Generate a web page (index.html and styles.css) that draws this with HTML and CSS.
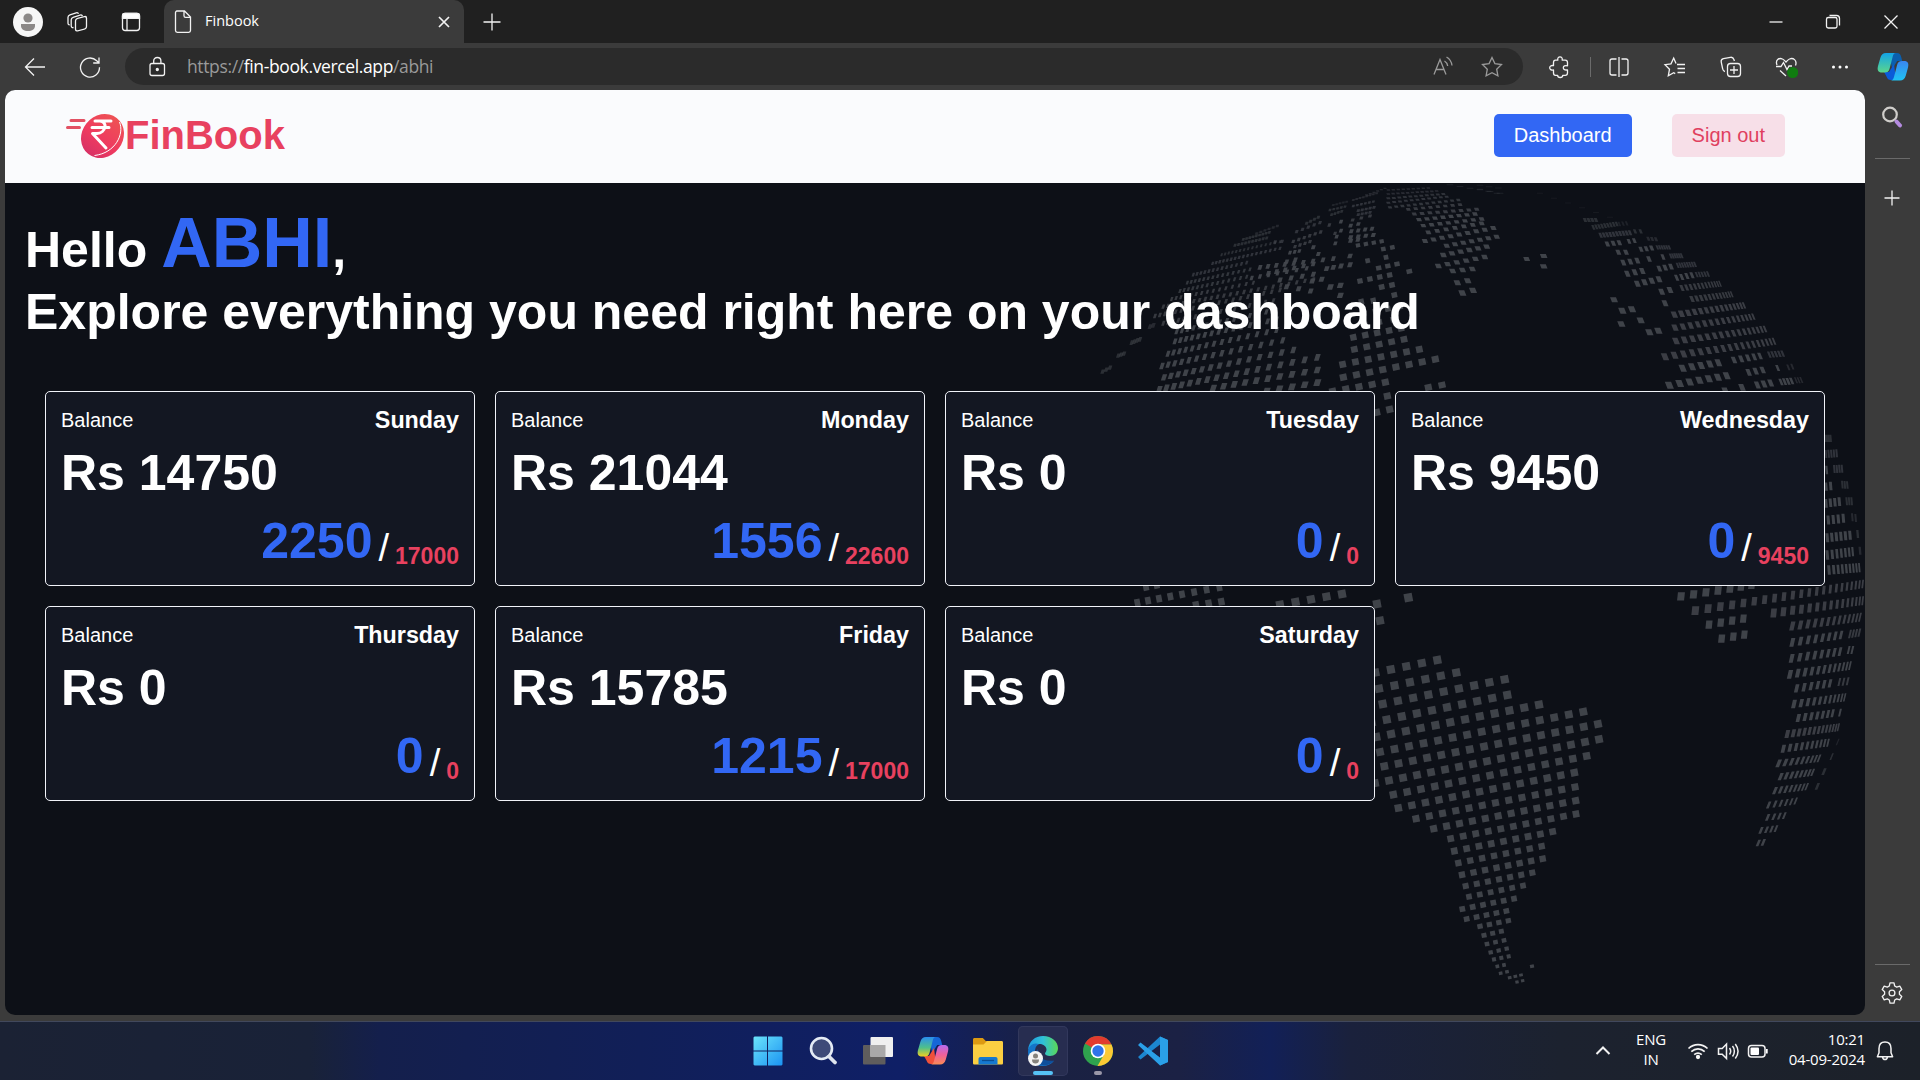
FILE: index.html
```html
<!DOCTYPE html>
<html lang="en">
<head>
<meta charset="utf-8">
<title>Finbook</title>
<link rel="stylesheet" href="styles.css">
</head>
<body>
<div class="titlebar">
  <span class="cell c-avatar"><svg width="30" height="30" viewBox="0 0 30 30"><circle cx="15" cy="15" r="15" fill="#f6f6f6"/><circle cx="15" cy="11" r="4.6" fill="#8b8887"/><path d="M8 17h14v2c0 3-3 5-7 5s-7-2-7-5z" fill="#8b8887"/></svg></span>
  <span class="cell c-work"><svg class="ico" viewBox="0 0 24 24"><rect x="9.5" y="7" width="11" height="12.500" rx="2.200" transform="skewY(-14) translate(0 4.200)"/><path d="M7.500 17.500c-1.500.3-2.300-.5-2.300-1.700V9.700c0-1.300.7-2 1.900-2.400l7-2.200c1.300-.4 2 .1 2.300 1.100"/><path d="M3.700 14.700C2.500 14.900 2 14 2 13V7.200c0-1.300.7-2 1.900-2.400l6.300-2c1.300-.4 2 .1 2.300 1"/></svg></span>
  <span class="cell c-tabs"><svg class="ico" viewBox="0 0 24 24"><rect x="3.500" y="3.500" width="17" height="17" rx="2.800"/><path d="M3.500 5.500c0-1.500 1-2.200 2.400-2.200h12c1.600 0 2.600.8 2.600 2.200v2.800h-17z" fill="#fff"/><path d="M8 8v12.500"/></svg></span>
  <div class="tab">
    <svg class="ico" viewBox="0 0 24 24"><path d="M5.500 1h8l6 6v13.500a1.800 1.800 0 0 1-1.800 1.800H6.300a1.800 1.800 0 0 1-1.800-1.800V2.800C4.500 1.800 5 1 6 1zM13 1.300v4.500c0 1 .6 1.600 1.600 1.600h4.600"/></svg>
    <span class="tab-title">Finbook</span>
    <svg class="ico thick" viewBox="0 0 24 24"><path d="M7 7l10 10M17 7L7 17"/></svg>
  </div>
  <span class="cell c-new"><svg class="ico" viewBox="0 0 24 24"><path d="M12 3.500v17M3.500 12h17"/></svg></span>
  <span class="spacer"></span>
  <span class="cell c-win"><svg class="ico" viewBox="0 0 24 24"><path d="M5.500 12h13"/></svg></span>
  <span class="cell c-win"><svg class="ico" viewBox="0 0 24 24"><rect x="5.500" y="7.500" width="10.500" height="10.500" rx="1.800"/><path d="M8.500 5.500h7c2 0 3 1 3 3v7"/></svg></span>
  <span class="cell c-win"><svg class="ico" viewBox="0 0 24 24"><path d="M5.500 5.500l13 13M18.500 5.500l-13 13"/></svg></span>
</div>

<div class="toolbar">
  <span class="cell c-back"><svg class="ico" viewBox="0 0 24 24"><path d="M22 12H2.500M11 3.500L2.500 12l8.500 8.500"/></svg></span>
  <span class="cell c-reload"><svg class="ico" viewBox="0 0 24 24"><path d="M21.500 12.300a9.500 9.500 0 1 1-2.800-6.500l2.300 2M21 2.500V8h-5.800"/></svg></span>
  <div class="address">
    <span class="cell c-lock"><svg class="ico" viewBox="0 0 24 24"><rect x="5" y="8.500" width="14.500" height="12" rx="2"/><path d="M8.700 8.500V6c0-2 1.500-3.500 3.600-3.500S15.900 4 15.900 6v2.500"/><circle cx="12.300" cy="14.500" r="1" fill="#fff"/></svg></span>
    <span class="url">https://<b>fin-book.vercel.app</b>/abhi</span>
    <span class="spacer"></span>
    <span class="cell c-read"><svg class="ico dim" viewBox="0 0 24 24"><path d="M3 19.500L9 4.500l6 15M5 14.500h8M13.500 6c2 1.200 3 3 3.200 5M15.500 2c3.200 1.800 5 4.700 5.500 8.500"/></svg></span>
    <span class="cell c-star"><svg class="ico dim" viewBox="0 0 24 24"><path d="M12 2.500l2.900 6.100 6.600.9-4.800 4.700 1.200 6.700-5.900-3.200-5.900 3.200 1.200-6.700-4.800-4.700 6.600-.9z"/></svg></span>
  </div>
  <span class="cell c-ext"><svg class="ico" viewBox="0 0 24 24"><path d="M5.500 7.500c0-1.500.7-2.300 2-2.300h2.300c-.4-2 .6-3.400 2.200-3.400s2.600 1.400 2.200 3.400h3c1.500 0 2.300.8 2.300 2.300v3.300c-2.600-.6-4.200.3-4.200 2s1.600 2.600 4.200 2v3.300c0 1.500-.8 2.300-2.300 2.300h-2.500c0 1.300-1 2.100-2.500 2.100s-2.500-.8-2.500-2.100H7.500c-1.300 0-2-.8-2-2.300V15C3 15.300 1.700 14.300 1.700 12.800S3 10.200 5.500 10.600z" stroke-linejoin="round"/></svg></span>
  <span class="vline"></span>
  <span class="cell c-split"><svg class="ico" viewBox="0 0 24 24"><path d="M9.500 4H5a2 2 0 0 0-2 2v12c0 1.200.8 2 2 2h4.500M14.500 4H19c1.200 0 2 .8 2 2v12c0 1.200-.8 2-2 2h-4.500M12 2v20"/></svg></span>
  <span class="cell c-fav"><svg class="ico" viewBox="0 0 24 24"><path d="M13 8.500L10.700 3 8 8.800l-6 .8 4.500 4.600-1.200 6.600 5.400-3 1.500.8M14 9.500h8M14.500 13.500H22M14.500 17.500H22"/></svg></span>
  <span class="cell c-coll"><svg class="ico" viewBox="0 0 24 24"><rect x="8.500" y="8.500" width="13" height="13" rx="3"/><path d="M15 11v8M11 15h8M6 16.500C4.500 16.200 4 15.600 3.700 14L2.200 7c-.3-1.800.4-3 2.200-3.400l7-1.300c1.700-.3 2.900.4 3.500 2.200l.5 1.500"/></svg></span>
  <span class="cell c-health"><svg class="ico" viewBox="0 0 24 24"><path d="M3 10C1 5 5 2.500 8.500 4c1.500.6 2.500 1.800 3.500 3 1-1.200 2-2.400 3.500-3C19 2.500 23.500 5 21.500 10.500M2 11.500h5l2.500-4 3.500 7 2-3.500h3M6 15.500l6 5.500"/><circle cx="18.700" cy="17.500" r="5.600" fill="#107c10" stroke="none"/></svg></span>
  <span class="cell c-more"><svg class="ico" viewBox="0 0 24 24"><g fill="#fff" stroke="none"><circle cx="5.500" cy="12" r="1.500"/><circle cx="12" cy="12" r="1.500"/><circle cx="18.500" cy="12" r="1.500"/></g></svg></span>
  <span class="cell c-pilot"><svg width="32" height="30" viewBox="0 0 32 30"><defs>
    <linearGradient id="cp1" x1="0" y1="0" x2="0" y2="1"><stop offset="0" stop-color="#12a4e8"/><stop offset="1" stop-color="#5bd68c"/></linearGradient>
    <linearGradient id="cp2" x1="0" y1="0" x2="0" y2="1"><stop offset="0" stop-color="#3a86f0"/><stop offset="1" stop-color="#1fc3f5"/></linearGradient></defs>
    <path d="M12 1h8c2.500 0 3.500 1.500 4.200 4l1 4h-5l-5 8z" fill="#0a5fae"/><path d="M7 20h5l5-8 2 16h-5c-2.500 0-3.700-1-4.500-3.500z" fill="#0b5bd8"/>
    <path d="M9 1h10c-2 0-2.800 1.500-3.400 4L12.500 17c-.7 2.500-2 3.500-5 3.500H5c-4 0-5-2.500-4-6.500l2.300-8C4.300 2.500 6 1 9 1z" fill="url(#cp1)"/><path d="M23 28.500H13.500c2 0 3-1.500 3.600-4l3-11.500c.7-2.500 2-4 5-4H27c4 0 5 2.500 4 6.500l-2.200 8c-1 3.500-2.800 5-5.800 5z" fill="url(#cp2)"/></svg></span>
</div>

<div class="window">
  <main class="page">
    <header class="site-header">
      <div class="logo">
        <svg width="60" height="46" viewBox="0 0 60 46"><defs><linearGradient id="lg" x1="0" y1="0" x2="0" y2="1"><stop offset="0" stop-color="#ee5254"/><stop offset=".6" stop-color="#ee3a60"/><stop offset="1" stop-color="#d83266"/></linearGradient></defs>
          <ellipse cx="36.500" cy="23" rx="20.500" ry="23" fill="url(#lg)" transform="rotate(38 36.500 23)"/>
          <path d="M53.500 9c5 12-4 31-25 33.500" fill="none" stroke="#fff" stroke-width="1"/>
          <path d="M5 7.500h13M1.500 14.500h12" stroke="#e25163" stroke-width="3" stroke-linecap="round"/>
          <path d="M29 8h16M26 14.500h17M34 8c8 .5 6 12-3 12.500h-4.500L40 35" fill="none" stroke="#fff" stroke-width="3" stroke-linecap="round" stroke-linejoin="round"/></svg>
        <span class="logo-text">FinBook</span>
      </div>
      <nav class="actions"><a class="btn btn-primary">Dashboard</a><a class="btn btn-soft">Sign out</a></nav>
    </header>
    <section class="dash">
      <svg class="globe" id="globe" viewBox="5 183 1860 832" width="1860" height="832"></svg>
      <h1 class="hello">Hello <span class="name">ABHI</span>,<br>Explore everything you need right here on your dashboard</h1>
      <div class="cards">
        <article class="card"><div class="top"><span>Balance</span><strong>Sunday</strong></div><p class="amount">Rs 14750</p><div class="ratio"><span class="used">2250</span><span class="slash">/</span><span class="total">17000</span></div></article>
        <article class="card"><div class="top"><span>Balance</span><strong>Monday</strong></div><p class="amount">Rs 21044</p><div class="ratio"><span class="used">1556</span><span class="slash">/</span><span class="total">22600</span></div></article>
        <article class="card"><div class="top"><span>Balance</span><strong>Tuesday</strong></div><p class="amount">Rs 0</p><div class="ratio"><span class="used">0</span><span class="slash">/</span><span class="total">0</span></div></article>
        <article class="card"><div class="top"><span>Balance</span><strong>Wednesday</strong></div><p class="amount">Rs 9450</p><div class="ratio"><span class="used">0</span><span class="slash">/</span><span class="total">9450</span></div></article>
        <article class="card"><div class="top"><span>Balance</span><strong>Thursday</strong></div><p class="amount">Rs 0</p><div class="ratio"><span class="used">0</span><span class="slash">/</span><span class="total">0</span></div></article>
        <article class="card"><div class="top"><span>Balance</span><strong>Friday</strong></div><p class="amount">Rs 15785</p><div class="ratio"><span class="used">1215</span><span class="slash">/</span><span class="total">17000</span></div></article>
        <article class="card"><div class="top"><span>Balance</span><strong>Saturday</strong></div><p class="amount">Rs 0</p><div class="ratio"><span class="used">0</span><span class="slash">/</span><span class="total">0</span></div></article>
      </div>
    </section>
  </main>
  <aside class="sidebar">
    <svg class="s-search" width="24" height="24" viewBox="0 0 24 24"><circle cx="10" cy="9.500" r="6.800" fill="none" stroke="#cfcdca" stroke-width="2.200"/><path d="M16.500 16.500l3.500 4" stroke="#b48be0" stroke-width="4" stroke-linecap="round"/></svg>
    <span class="hline"></span>
    <svg class="ico s-plus" viewBox="0 0 24 24"><path d="M12 4.500v15M4.500 12h15"/></svg>
    <span class="spacer"></span>
    <span class="hline"></span>
    <svg class="ico s-gear" viewBox="0 0 24 24"><path d="M10 1.800h4l.7 3.200 2 1.100 3.100-1 2 3.500-2.400 2.200v2.400l2.400 2.200-2 3.500-3.100-1-2 1.100-.7 3.200h-4L9.300 19l-2-1.100-3.100 1-2-3.500 2.400-2.200v-2.400L2.200 8.600l2-3.500 3.100 1 2-1.100z" stroke-linejoin="round"/><circle cx="12" cy="12" r="2.900"/></svg>
  </aside>
</div>

<div class="taskbar">
  <div class="apps">
    <span class="app"><svg width="30" height="30" viewBox="0 0 30 30"><defs><linearGradient id="w" x1="0" y1="0" x2="1" y2="1"><stop offset="0" stop-color="#6be4fb"/><stop offset="1" stop-color="#1b93f2"/></linearGradient></defs><path d="M1.500.5H14v14H.5v-13zM15 .5h13.500l1 1v13H15zM.5 15.500H14v14H1.500l-1-1zM15 15.500h14.500v13l-1 1H15z" fill="url(#w)"/></svg></span>
    <span class="app"><svg width="30" height="30" viewBox="0 0 30 30"><circle cx="13.500" cy="12.500" r="10.500" fill="#3e4a78" stroke="#e4ebf5" stroke-width="2.600"/><path d="M21 20.500l6 6" stroke="#dfe4ee" stroke-width="3.800" stroke-linecap="round"/></svg></span>
    <span class="app"><svg width="30" height="30" viewBox="0 0 30 30"><rect x="0" y="9" width="22.500" height="19.500" rx="1" fill="#5f5d5d"/><rect x="7.500" y="1" width="22.500" height="20" rx="1" fill="#efefef"/><rect x="7.500" y="9" width="15" height="12" fill="#a9a8a8"/></svg></span>
    <span class="app"><svg width="32" height="30" viewBox="0 0 32 30"><defs>
      <linearGradient id="p1" x1="0" y1="0" x2="0" y2="1"><stop offset="0" stop-color="#2a8ef0"/><stop offset=".55" stop-color="#4fc08a"/><stop offset="1" stop-color="#f0d020"/></linearGradient>
      <linearGradient id="p2" x1="0" y1="0" x2="0" y2="1"><stop offset="0" stop-color="#b36bf0"/><stop offset=".5" stop-color="#f0609a"/><stop offset="1" stop-color="#f98a54"/></linearGradient></defs>
      <path d="M12 1h8c2.500 0 3.500 1.500 4.200 4l1 4h-5l-5 8z" fill="#1567d8"/><path d="M7 20h5l5-8 2 16h-5c-2.500 0-3.700-1-4.500-3.500z" fill="#f0503a"/>
      <path d="M9 1h10c-2 0-2.800 1.500-3.400 4L12.500 17c-.7 2.500-2 3.500-5 3.500H5c-4 0-5-2.500-4-6.500l2.300-8C4.300 2.500 6 1 9 1z" fill="url(#p1)"/><path d="M23 28.500H13.500c2 0 3-1.500 3.600-4l3-11.500c.7-2.500 2-4 5-4H27c4 0 5 2.500 4 6.500l-2.200 8c-1 3.500-2.800 5-5.800 5z" fill="url(#p2)"/></svg></span>
    <span class="app"><svg width="30" height="30" viewBox="0 0 30 30"><path d="M0 3.500C0 2.500.7 2 1.500 2h8.300l3 3H29v8H0z" fill="#dc9a12"/><path d="M0 8.500h10.500L14 5h14.500c1 0 1.500.6 1.500 1.500V27c0 1-.5 1.500-1.500 1.500h-27C.6 28.500 0 28 0 27z" fill="#fbcf42"/><path d="M5.500 28.500V23c0-1.300.8-2 2-2h15c1.300 0 2 .8 2 2v5.500z" fill="#1679d0"/><path d="M9 24.500h12" stroke="#0b4e92" stroke-width="1.300"/></svg></span>
    <span class="app active"><svg width="32" height="32" viewBox="0 0 32 32"><defs><linearGradient id="e1" x1="0" y1=".4" x2="1" y2=".4"><stop offset="0" stop-color="#1e9ae0"/><stop offset=".5" stop-color="#2fc0d8"/><stop offset="1" stop-color="#5bd855"/></linearGradient></defs>
      <path d="M1 15C2 6 8 1 16 1c9 0 15 6 15 12 0 5-3.500 8-8 8-3 0-5-1-5-2.500 0-1 1.500-1.500 1.500-4 0-3-3-5.500-7-5.500-6 0-10 3-11.500 6z" fill="url(#e1)"/><path d="M1 17c0-6 5-10 11-8-4 2-5 7-3 12 2 6 9 9 18 5-3 3.500-7 5-11 5C7 31 1 25 1 17z" fill="#1574c8"/><path d="M11 14c-1.500 6 4 13 16 11.500-3 4-8 5.500-12 4.500-7-2-9-12-4-16z" fill="#0e4f9b"/>
      <circle cx="8.500" cy="23.500" r="7.500" fill="#f4f4f4"/><circle cx="8.500" cy="21" r="2.500" fill="#85827c"/><path d="M5 24.500h7c0 3-1.500 4-3.500 4S5 27.500 5 24.500z" fill="#85827c"/></svg><i class="run wide"></i></span>
    <span class="app"><svg width="32" height="32" viewBox="0 0 32 32"><circle cx="16" cy="16" r="15" fill="#2fa24e"/><path d="M16 16L3 8.500A15 15 0 0 1 29.500 9.500H16z" fill="#e23a2e"/><path d="M16 9.500h13.500A15 15 0 0 1 15.500 31L22 19.500z" fill="#fcc934"/><circle cx="16" cy="16" r="7.300" fill="#fff"/><circle cx="16" cy="16" r="5.700" fill="#2f73ea"/></svg><i class="run"></i></span>
    <span class="app"><svg width="32" height="32" viewBox="0 0 32 32"><path d="M23 1.500L31 5v22l-8 3.500V9.500L3.500 24.500 1 22z" fill="#1c86cf"/><path d="M23 1.500L31 5v22l-8 3.500L1 10l2.500-2.500L23 22.500z" fill="#2aa0e8"/><path d="M23 10.500v11.500l-7.500-5.800z" fill="#1a2045"/></svg></span>
  </div>
  <div class="tray">
    <svg class="ico t-chev" viewBox="0 0 24 24"><path d="M5.500 15L12 8.500l6.500 6.500" stroke-width="2"/></svg>
    <div class="lang">ENG<br>IN</div>
    <svg class="ico t-wifi" viewBox="0 0 24 24"><g stroke-width="1.700"><path d="M2.500 9.500c5.500-5.300 13.500-5.300 19 0M5.300 12.700c4-3.700 9.400-3.700 13.400 0M8.200 15.700c2.300-2 5.300-2 7.600 0"/></g><circle cx="12" cy="18" r="1.500" fill="#fff"/></svg>
    <svg class="ico t-snd" viewBox="0 0 24 24"><path d="M2.500 9.500h3.700L10.500 5v14.500l-4.300-4.300H2.500zM13.500 9c1.500 2 1.500 4.500 0 6.500M16.500 7c2.500 3 2.500 7.500 0 10.500M19.300 5c3.400 4.500 3.400 10 0 14.500" stroke-width="1.500"/></svg>
    <svg class="ico t-bat" viewBox="0 0 24 24"><rect x="2.500" y="6.500" width="16.500" height="11.500" rx="3" stroke-width="1.500"/><rect x="4.500" y="8.500" width="8.500" height="7.500" rx="1" fill="#fff" stroke="none"/><path d="M20 10h1.700v4.500H20z" fill="#fff" stroke="none"/></svg>
    <div class="clock">10:21<br>04-09-2024</div>
    <svg class="ico t-bell" viewBox="0 0 24 24"><path d="M12 3c-4 0-6 2.800-6 6.500v4.300l-1.600 4h15.200l-1.600-4V9.500C18 5.800 16 3 12 3zM9.500 18c.3 1.700 1.200 2.500 2.500 2.500s2.200-.8 2.500-2.500" stroke-width="1.500" stroke-linejoin="round"/></svg>
  </div>
</div>
<script src="globe.js"></script>
</body>
</html>
```

FILE: styles.css
```css
* { box-sizing: border-box; }
body {
  margin: 0;
  width: 1920px;
  height: 1080px;
  overflow: hidden;
  display: flex;
  flex-direction: column;
  background: #3b3b3b;
  color: #fff;
  font-family: "Liberation Sans", Arial, sans-serif;
}
svg { display: block; flex: none; }
.ico { width: 24px; height: 24px; fill: none; stroke: #f2f2f2; stroke-width: 1.3; }
.ico.dim { stroke: #9a9a9a; }
.ico.thick { stroke-width: 1.7; }
.cell { display: flex; align-items: center; justify-content: center; flex: none; }
.spacer { flex: 1; }

.titlebar { display: flex; height: 43px; background: #202020; }
.c-avatar { width: 56px; }
.c-work { width: 44px; }
.c-tabs { width: 62px; }
.c-new { width: 56px; }
.c-win { width: 57px; }
.c-win:last-child { width: 59px; }
.tab {
  display: flex;
  align-items: center;
  width: 300px;
  margin-left: 2px;
  padding: 0 8px 0 7px;
  background: #3b3b3b;
  border-radius: 10px 10px 0 0;
}
.tab-title {
  flex: 1;
  margin-left: 10px;
  margin-top: -2px;
  font: 14.5px "Open Sans", "Noto Sans", sans-serif;
}

.toolbar { display: flex; align-items: center; height: 47px; flex: none; }
.address {
  display: flex;
  align-items: center;
  width: 1398px;
  height: 37px;
  margin-left: 15px;
  border-radius: 19px;
  background: #2b2b2b;
}
.url { margin: -2px 0 0 -1px; color: #9a9a9a; font: 17.5px "Open Sans", "Noto Sans", sans-serif; letter-spacing: -.37px; }
.url b { color: #fff; font-weight: 400; }
.c-back { width: 70px; }
.c-reload { width: 40px; }
.c-lock { width: 63px; }
.c-read { width: 36px; }
.c-star { width: 62px; }
.c-ext { width: 50px; margin-left: 12px; }
.vline { width: 1px; height: 20px; margin: 0 1px 0 5px; background: #6b6b6b; }
.c-split { width: 54px; }
.c-fav { width: 58px; }
.c-coll { width: 53px; }
.c-health { width: 58px; }
.c-more { width: 50px; }
.c-pilot { width: 55px; }

.window { display: flex; height: 931px; flex: none; padding-left: 5px; }
.page {
  width: 1860px;
  height: 925px;
  border-radius: 10px;
  overflow: hidden;
  background: #0d1017;
}
.site-header {
  display: flex;
  align-items: center;
  justify-content: space-between;
  height: 93px;
  padding: 0 80px 2px 61px;
  background: #fafbfd;
}
.logo { display: flex; align-items: center; }
.logo-text { margin-left: -1px; color: #e8415f; font-size: 40px; font-weight: 700; }
.actions { display: flex; gap: 40px; }
.btn {
  height: 43px;
  padding: 0 20px;
  border-radius: 5px;
  font-size: 20px;
  line-height: 43px;
}
.btn-primary { background: #3267f4; color: #fff; }
.btn-soft { background: #f7dfe8; color: #e0405f; }

.dash { position: relative; height: 832px; padding: 25px 20px 0; }
.globe { position: absolute; left: 0; top: 0; }
.hello { position: relative; margin: 0; font-size: 50px; line-height: 62px; }
.name { color: #3267f4; font-size: 70px; line-height: 70px; }
.cards {
  position: relative;
  display: grid;
  grid-template-columns: repeat(4, 430px);
  gap: 20px;
  margin: 48px 20px 0;
}
.card {
  height: 195px;
  padding: 15px;
  border: 1px solid #f1f3f9;
  border-radius: 5px;
  background: #131722;
}
.top { display: flex; justify-content: space-between; align-items: center; height: 26px; font-size: 20px; }
.top strong { font-size: 23.3px; }
.amount { margin: 10px 0 0; font-size: 50px; font-weight: 700; line-height: 60px; }
.ratio { display: flex; justify-content: flex-end; align-items: flex-end; height: 65px; line-height: 1; }
.used { color: #3267f4; font-size: 50px; font-weight: 700; padding-bottom: 2px; }
.slash { font-size: 38px; margin: 0 6px; padding-bottom: 1px; }
.total { color: #e8415f; font-size: 23px; font-weight: 700; }

.sidebar { width: 55px; height: 925px; padding-right: 1px; display: flex; flex-direction: column; align-items: center; }
.s-search { margin-top: 15px; }
.hline { width: 35px; height: 1px; background: #6a6a6a; }
.s-search + .hline { margin-top: 29px; }
.s-plus { margin-top: 27px; }
.s-gear { margin: 16px 0 10px; }

.taskbar {
  position: relative;
  display: flex;
  justify-content: space-between;
  height: 59px;
  flex: none;
  padding-left: 743px;
  border-top: 1px solid #41485c;
  background: linear-gradient(90deg, #1b2234 0, #192238 310px, #141f4c 380px, #111f58 640px, #0f1f66 900px, #1a2142 1050px, #1b2144 1180px, #122057 1270px, #1a213c 1350px, #1c222f 1560px, #1c2129 100%);
}
.apps { display: flex; align-items: center; gap: 5px; }
.app {
  position: relative;
  display: flex;
  align-items: center;
  justify-content: center;
  width: 50px;
  height: 50px;
  margin-top: -1px;
  border-radius: 5px;
}
.active { background: #272d50; box-shadow: inset 0 0 0 1px #32385c; }
.run { position: absolute; bottom: 1px; left: 21px; width: 8px; height: 4px; border-radius: 2px; background: #9a97a8; }
.run.wide { left: 15px; width: 20px; background: #56c2f5; }
.tray { display: flex; align-items: center; font: 15px/20px "Open Sans", "Noto Sans", sans-serif; letter-spacing: -.2px; }
.t-chev { margin-right: 21px; }
.lang { width: 30px; text-align: center; margin: -4px 20px 0 0; }
.t-snd { margin-left: 6px; }
.t-bat { margin-left: 6px; }
.clock { width: 95px; margin-top: -4px; text-align: right; }
.t-bell { margin: 0 23px 0 8px; }
```

FILE: globe.js
```js
// Dotted globe. Each row: x0, y0, x1, y1, count, dot width, dot height, last/first gap ratio, opacity.
// A group's rows share an origin and are in thirds of a pixel.
const groups = [
  { x: 1080, y: 180, skew: -18, rows: [
    [238,628,712,532,17,14,20,1.8],[252,592,640,510,15,13,19,1.7],[246,558,608,481,15,11,19,1.8],
    [264,521,590,450,15,10,18,1.8],[285,484,590,418,15,10,17,1.7],[290,455,585,390,15,9,16,1.6],
    [250,430,580,362,18,8,15,1.7,.8],[225,408,600,330,20,8,14,1.7,.8],[250,380,700,298,24,8,13,1.8,.8],
    [275,357,520,308,15,7,12,1.6,.8],[300,333,500,290,14,7,12,1.5,.75],[322,308,510,268,14,7,11,1.5,.75],
    [340,284,500,248,13,7,11,1.4,.7],[398,250,600,205,17,7,10,1.4,.7],[425,224,600,185,15,6,9,1.4,.6],
    [465,196,560,174,10,8,9,1,.6],[490,178,568,157,9,8,8,1,.6],[530,160,592,138,6,9,7,1,.45],
    [620,320,692,333,3,13,15,1],[400,624,712,570,10,16,20,1.25],[560,633,712,608,5,18,20,1],
    [220,436,210,440,2,10,14,1,.5],[155,488,180,478,4,9,14,1,.6],[115,527,132,521,3,10,13,1,.6],[68,575,90,563,3,10,13,1,.6],
    [540,262,760,236,9,11,14,1.3],[565,280,700,252,6,11,14,1.2],[600,300,700,283,4,12,15,1],[515,294,680,265,7,9,13,1.2],
    [585,186,606,184,2,9,10,1,.7],[620,245,646,239,2,11,13,1],[630,218,658,213,3,9,11,1],[650,155,720,128,5,9,10,1,.7],
    [640,184,722,156,6,9,10,1,.8],[645,200,690,185,4,9,10,1,.8],[680,130,715,112,4,9,9,1,.6],[700,202,715,222,2,11,12,1],
    [748,135,765,160,2,9,10,1,.8],[770,170,766,190,2,10,11,1],[783,125,783,152,2,10,11,1],[755,104,785,94,4,8,8,1,.6],
    [750,90,795,80,5,8,7,1,.6],[760,75,800,65,5,8,6,1,.4],[820,60,890,40,8,8,6,1,.5],[820,78,880,65,6,8,7,1,.7],[835,92,882,82,5,9,8,1,.7],[835,104,870,97,4,9,8,1,.7],
    [818,120,870,108,3,10,9,1,.8],[812,137,835,132,2,11,11,1],[814,154,876,146,4,11,12,1],[812,172,880,165,4,12,12,1],[812,182,834,179,2,12,12,1],
    [783,258,810,254,2,13,15,1],[810,228,810,228,1,13,14,1],[751,321,781,316,2,16,16,1],[781,346,781,346,1,16,16,1],[725,298,697,303,2,14,15,1],
    [740,266,760,262,2,13,14,1]
  ]},
  { x: 1080, y: 180, skew: 0, rot: -12, rows: [
    [820,472,963,445,5,19,19],[823,508,972,478,5,20,19],[788,553,1018,508,7,20,20],[790,592,1066,538,8,21,20],
    [758,634,916,607,5,21,20],[922,648,922,648,1,21,20],[890,697,929,688,2,21,21],[1045,622,1086,615,2,21,19],
    [844,365,880,362,2,16,17],[943,345,943,345,1,17,16],[905,321,936,315,2,17,16],[840,303,929,285,4,16,15],[988,274,988,274,1,17,14],
    [896,264,951,252,3,16,14],[863,242,863,242,1,14,14],[918,232,918,232,1,14,14],[910,207,937,202,2,14,13],[834,196,905,184,4,13,12],
    [855,435,940,418,3,18,17],[850,400,960,380,4,17,17]
  ]},
  { x: 1080, y: 180, skew: 22, rows: [
    [925,30,1045,24,9,10,4,1,.5],[925,42,1070,33,11,10,5,1,.55],[925,55,1090,42,11,11,6,1,.65],[925,68,1100,50,11,11,6,1,.7],[930,82,1135,60,12,11,7,1,.75],
    [985,88,1140,74,8,12,8,1,.8],[1003,102,1190,88,9,13,9,1,.85],[1017,119,1185,102,8,14,10],[1030,137,1205,117,8,14,10],
    [1045,157,1205,130,7,14,11],[1035,183,1240,144,9,15,12],[1100,197,1250,170,7,15,12],[1090,225,1220,200,6,16,13],
    [1075,258,1214,231,6,16,13],[1118,273,1177,267,3,16,14],[1132,308,1163,302,2,17,15],[1147,339,1179,331,2,18,16],
    [1110,14,1260,40,6,20,3,1,.35],[1200,16,1255,24,3,20,3,1,.25],[860,45,915,25,6,9,4,1,.5]
  ]},
  { x: 1480, y: 180, skew: 22, rows: [
    [315,120,348,120,4,9,12,1,.6],[340,142,410,132,9,7,14,1,.6],[418,132,440,130,3,6,13,1,.35],[362,166,450,158,10,8,15,1,.7],[465,154,482,154,2,8,13,1,.6],
    [382,192,418,188,3,11,15],[447,184,463,182,2,9,14],[505,176,528,178,3,8,12,1,.5],[415,217,438,217,2,12,15],[483,208,515,204,3,10,15],[532,202,568,202,6,6,13,1,.7],
    [430,248,472,242,3,12,17],[507,237,507,237,1,11,16],[549,231,549,231,1,9,16],[572,228,605,227,6,6,15,1,.7],[442,281,487,273,3,13,18],[538,266,573,260,3,11,17],[593,256,645,253,8,6,16,1,.7],
    [472,311,537,298,4,14,18],[590,293,636,286,4,9,18],[650,284,684,282,5,6,16,1,.7],[545,335,570,330,2,14,18],[606,324,720,311,12,9,18,.5,.8],[555,370,555,370,1,14,18],
    [636,357,755,343,12,10,18,.5,.8],[583,404,792,376,15,15,19,.4,.9],[585,443,820,410,15,15,19,.4,.9],[588,483,855,447,16,16,20,.4,.9],[555,530,882,484,18,17,21,.35,.9],
    [608,565,715,548,5,17,21,.9],[762,540,840,528,5,12,20,.8],[868,524,908,521,5,7,19,1,.7],[568,616,740,587,7,19,21,.85],[806,577,848,570,3,12,20],[893,564,893,564,1,8,18],[925,562,937,560,2,6,17,1,.5],
    [735,630,735,630,1,16,15],[786,622,786,622,1,15,20],[832,615,872,609,3,13,21],[903,606,935,603,4,8,20],[948,601,964,600,3,5,18,1,.5],
    [402,359,402,359,1,18,15],[427,392,456,388,2,18,18],[424,432,424,432,1,18,17],[482,421,482,421,1,18,17],[508,457,535,452,2,18,18],[140,237,140,237,1,16,12],[191,228,191,228,1,18,12],[191,259,191,259,1,18,13],
    [0,28,50,40,3,18,3,1,.35],[180,40,390,112,6,18,3,1,.2]
  ]},
  { x: 1480, y: 180, skew: 5, rows: [
    [1035,775,1052,775,4,6,22,1,.6],[1038,822,1070,820,5,6,24,1,.7],[1040,870,1040,870,1,7,26],[1063,867,1086,866,4,6,24,1,.7],[1038,920,1052,918,2,9,25],[1087,914,1102,915,3,6,23,1,.6],
    [1038,970,1078,965,4,9,26],[1100,964,1115,964,3,6,24,1,.6],[1045,1020,1090,1015,4,9,27],[1117,1012,1127,1014,2,6,24,1,.5],[1042,1073,1110,1066,6,9,27],[1133,1062,1133,1062,1,7,24,1,.6],
    [1042,1125,1118,1115,7,9,28,.7],[1140,1112,1140,1112,1,7,24,1,.5],[1047,1170,1138,1163,9,9,28,.6]
  ]},
  { x: 1500, y: 560, skew: -6, rows: [
    [543,109,690,86,5,21,25,.95],[723,80,755,75,2,19,24],[586,152,1088,72,22,21,26,.25,.9],[821,159,1088,122,15,17,27,.3,.9],
    [627,194,730,176,4,19,25,.95],[665,236,733,224,3,19,25,.95]
  ]},
  { x: 1500, y: 560, skew: -13, rows: [
    [877,198,1080,172,13,13,27,.4,.9],[877,247,1023,225,8,12,26,.7],[1050,222,1078,218,4,6,25,1,.8],[875,295,1020,275,8,12,26,.7],[1046,270,1057,270,2,6,24],
    [870,343,1050,317,12,13,26,.4],[890,385,990,370,6,11,25,.8],[1018,366,1043,364,3,6,24,1,.8],[882,432,1034,412,11,12,25,.4],[895,474,998,460,7,11,24,.7],[1020,458,1020,458,1,6,23],
    [862,522,1015,502,13,12,24,.4,.9],[850,566,984,548,10,11,24,.5]
  ]},
  { x: 1500, y: 560, skew: -22, rows: [
    [1013,546,1013,546,1,4,20,1,.4],[836,610,957,595,9,11,23,.5],[995,590,995,590,1,5,20,1,.6],[842,650,938,637,8,10,22,.6],[972,635,972,635,1,8,20,1,.6],
    [825,692,920,680,8,9,22,.6],[952,679,952,679,1,8,20,1,.6],[806,735,887,723,6,8,21,.7],[803,772,853,767,4,8,20,.8],[783,811,828,806,4,8,20,.8],[775,849,790,847,2,8,20]
  ]},
  { x: 1100, y: 560, skew: 0, rot: -11, rows: [
    [112,128,358,82,8,17,22,1.2],[138,82,170,76,2,17,20],[288,135,364,125,3,19,22],[540,134,726,102,5,24,24],[831,132,831,132,1,24,24],[840,182,840,182,1,24,24],[925,113,925,113,1,25,25],
    [826,338,1012,300,5,24,24],[837,386,1069,338,6,24,24],[848,432,1214,358,9,24,24],[815,488,1222,405,10,24,24],[829,531,1317,434,12,24,24],[840,576,1450,455,15,23,23],[853,619,1494,492,16,23,23],
    [825,670,1497,538,17,23,23],[880,704,1460,588,15,22,22],[895,744,1423,638,14,22,22],[948,776,1425,681,13,21,21],[1001,806,1427,722,12,21,21],[1052,836,1428,762,11,20,20],[1063,873,1358,815,9,20,20],
    [1075,909,1325,859,8,19,19],[1086,944,1328,896,8,19,19],[1097,978,1297,938,7,18,18],[1107,1010,1269,977,6,17,17],[1087,1047,1242,1016,6,17,17],[1100,1077,1219,1053,5,17,16],[1140,1099,1225,1082,4,16,15],
    [1152,1126,1204,1114,3,15,14],[1161,1152,1212,1141,3,14,13],[1172,1177,1220,1166,3,13,12],[1182,1198,1226,1189,3,12,12],[1192,1219,1212,1215,2,11,11],[1202,1240,1221,1235,2,11,10],
    [1229,1253,1263,1245,3,11,9],[1251,1266,1268,1262,2,10,9],[1296,1219,1296,1219,1,12,10]
  ]}
];

const NS = 'http://www.w3.org/2000/svg';
const globe = document.getElementById('globe');
for (const g of groups) {
  for (const [x0, y0, x1, y1, n, w, h, ratio = 1, alpha = 1] of g.rows) {
    const gaps = [];
    for (let i = 0; i < n - 1; i++) gaps.push(n > 2 ? 1 + (ratio - 1) * i / (n - 2) : 1);
    const total = gaps.reduce((a, b) => a + b, 0) || 1;
    let at = 0;
    for (let i = 0; i < n; i++) {
      const t = at / total;
      const grow = ratio < 1 ? 1 + (ratio - 1) * t : 1;
      const dw = Math.max(w * grow, 4);
      const r = document.createElementNS(NS, 'rect');
      r.setAttribute('x', -dw / 6);
      r.setAttribute('y', -h / 6);
      r.setAttribute('width', dw / 3);
      r.setAttribute('height', h / 3);
      r.setAttribute('fill', '#44474e');
      r.setAttribute('opacity', alpha * .93);
      r.setAttribute('transform', `translate(${g.x + (x0 + (x1 - x0) * t) / 3} ${g.y + (y0 + (y1 - y0) * t) / 3}) rotate(${g.rot || 0}) skewX(${g.skew})`);
      globe.appendChild(r);
      at += gaps[i] || 0;
    }
  }
}
```
